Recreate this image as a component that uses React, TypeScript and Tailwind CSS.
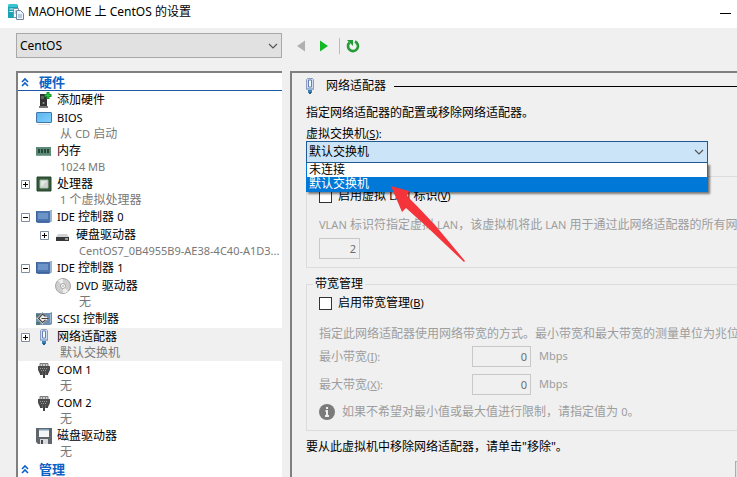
import React, { useState } from 'react';
import clsx from 'clsx';

type Node = {
  id: string;
  label: React.ReactNode;
  detail?: React.ReactNode;
  icon: React.ReactNode;
  expand?: 'plus' | 'minus';
  nested?: boolean;
};

const Latin = ({ children }: { children: React.ReactNode }) => (
  <span className="text-[11px]">{children}</span>
);

const ServerIcon = () => (
  <svg width="16" height="16" viewBox="0 0 16 16">
    <path d="M0 1l2-1h7l1 2v12H0z" fill="#1ba3b5" />
    <path d="M0 1l2-1h7v3H0z" fill="#3cc4d0" />
    <path d="M1.500 5h4M1.500 7.500h4" stroke="#d8f6f8" />
    <path d="M5.500 4.500h5v9h-5z" fill="#fff" stroke="#8093a6" />
    <path d="M8.500 6.500h4l3 3v6h-7z" fill="#eef4fb" stroke="#6f86a0" />
    <path d="M10 11h4M10 13h4M6.500 7h1.500M6.500 9h1.500" stroke="#7fa3c4" />
  </svg>
);

const AddIcon = () => (
  <svg width="16" height="16" viewBox="0 0 16 16">
    <path d="M4 2h7v12H4z" fill="#333" />
    <path d="M3 14h9v2H3z" fill="#777" />
    <path d="M5 4h3v3H5z" fill="#59635b" />
    <circle cx="7.500" cy="11" r="1" fill="#999" />
    <path d="M12 0v7M8.500 3.500h7" stroke="#13912a" strokeWidth="3" />
    <path d="M12 1v5M9.500 3.500h5" stroke="#35cf3d" strokeWidth="1" />
  </svg>
);

const MonitorIcon = () => (
  <svg width="16" height="16" viewBox="0 0 16 16">
    <defs>
      <linearGradient id="screen" x1="0" y1="0" x2="1" y2="1">
        <stop offset="0" stopColor="#5bb4f2" />
        <stop offset="1" stopColor="#7fd0fb" />
      </linearGradient>
    </defs>
    <rect x="0.500" y="2.500" width="15" height="10" rx="0.500" fill="url(#screen)" stroke="#4176a8" />
    <path d="M2 14.500h12" stroke="#ddd" />
  </svg>
);

const MemoryIcon = () => (
  <svg width="16" height="16" viewBox="0 0 16 16">
    <path d="M0 4h15v9H0z" fill="#5d8a76" />
    <path d="M2 6h2v4H2zM5 6h2v4H5zM8 6h2v4H8zM11 6h2v4h-2z" fill="#27473a" />
    <path d="M0.500 12.500h14" stroke="#a9c4b4" strokeDasharray="1 1" />
  </svg>
);

const CpuIcon = () => (
  <svg width="16" height="16" viewBox="0 0 16 16">
    <path d="M1 1h14v14H1z" fill="#35593b" stroke="#27452c" />
    <path d="M4 4h8v8H4z" fill="#e4e8e4" stroke="#9fb5a1" />
    <path d="M5 11l6-6v6z" fill="#cdd3cd" />
  </svg>
);

const ControllerIcon = () => (
  <svg width="16" height="16" viewBox="0 0 16 16">
    <path d="M0 2h13l3-1v11l-3 2H2l-2-1z" fill="#4c74ad" />
    <path d="M2 4h10v6H2z" fill="#6d94c8" />
    <path d="M14 2l2-1v11l-2 1z" fill="#9db4d3" />
    <path d="M0.500 2v11M1 12.500h12" stroke="#3d639b" />
  </svg>
);

const DiskIcon = () => (
  <svg width="16" height="16" viewBox="0 0 16 16">
    <path d="M3 7h9l2 3H1z" fill="#d2d2d2" />
    <path d="M1 10h13v4H1z" fill="#383838" />
    <path d="M10 12h3" stroke="#fff" />
  </svg>
);

const DvdIcon = () => (
  <svg width="16" height="16" viewBox="0 0 16 16">
    <circle cx="8" cy="8" r="7.500" fill="#cfcfcf" stroke="#a5a5a5" />
    <path d="M8 8L3 2.500A7 7 0 0 1 8 1zM8 8l5 5.500A7 7 0 0 1 8 15z" fill="#efefef" />
    <circle cx="8" cy="8" r="2.500" fill="#f8f8f8" stroke="#aaa" />
    <circle cx="8" cy="8" r="0.800" fill="#999" />
  </svg>
);

const ScsiIcon = () => (
  <svg width="16" height="16" viewBox="0 0 16 16">
    <path d="M0 2h14l2-1v12l-2 1H0z" fill="#6d8fb4" />
    <path d="M0 3h4v3H0zM0 11h4v3H0z" fill="#4d7a76" />
    <path d="M6.500 1.500l6 6-6 6-6-6z" fill="#eee" stroke="#999" />
    <path d="M9.500 5.500L6.500 3 2.500 7.500l4 4 3-2.500M5.500 7.500h7" fill="none" stroke="#444" strokeWidth="1.200" />
    <path d="M14.500 3v9" stroke="#9fbbd8" />
  </svg>
);

const NetworkIcon = () => (
  <svg width="16" height="16" viewBox="0 0 16 16">
    <path d="M4.500 11.500v-10l1-1h5l1 1v10z" fill="#d3def0" stroke="#8c9cbc" />
    <path d="M6.500 2v7h3V2z" fill="#f4f8ff" stroke="#6582ba" />
    <path d="M5 10h6v2H5z" fill="#9db3d6" />
    <path d="M6 12h4v3H6z" fill="#3a82b4" />
    <path d="M8 14v2" stroke="#2a5f8c" strokeWidth="2" />
  </svg>
);

const ComIcon = () => (
  <svg width="16" height="16" viewBox="0 0 16 16">
    <path d="M4 4V1.500h8V4" fill="#ccc" stroke="#777" />
    <path d="M6.500 1v3M9.500 1v3" stroke="#888" />
    <path d="M2 4h12v4l-1 2H3L2 8z" fill="#4c4c4c" />
    <path d="M4 6.500h8M5 8.500h6" stroke="#999" strokeDasharray="1 1" />
    <path d="M3 10h10v1l-2 1v1H5v-1l-2-1z" fill="#666" />
    <path d="M5 10v3M8 10v6M11 10v3" stroke="#444" strokeWidth="2" />
  </svg>
);

const FloppyIcon = () => (
  <svg width="16" height="16" viewBox="0 0 16 16">
    <path d="M0 0h16v16H2l-2-2z" fill="#60666b" />
    <path d="M3 1h10v8H3z" fill="#f4f6f7" />
    <path d="M3 1h10v1.500H3z" fill="#7fa3b8" />
    <path d="M4 11h8v5H4z" fill="#d9dcde" />
    <path d="M5 12h2v4H5z" fill="#44494d" />
  </svg>
);

const Chevron = () => (
  <svg className="pointer-events-none absolute right-1 top-1/2 -translate-y-1/2" width="10" height="6" viewBox="0 0 10 6">
    <path d="M1 1l4 4 4-4" fill="none" stroke="#555" strokeWidth="1.200" />
  </svg>
);

const NODES: Node[] = [
  { id: 'add', label: '添加硬件', icon: <AddIcon /> },
  { id: 'bios', label: <Latin>BIOS</Latin>, detail: <>从 <Latin>CD</Latin> 启动</>, icon: <MonitorIcon /> },
  { id: 'memory', label: '内存', detail: <Latin>1024 MB</Latin>, icon: <MemoryIcon /> },
  { id: 'cpu', label: '处理器', detail: <><Latin>1</Latin> 个虚拟处理器</>, icon: <CpuIcon />, expand: 'plus' },
  { id: 'ide0', label: <><Latin>IDE</Latin> 控制器 <Latin>0</Latin></>, icon: <ControllerIcon />, expand: 'minus' },
  {
    id: 'disk',
    label: '硬盘驱动器',
    detail: <Latin>CentOS7_0B4955B9-AE38-4C40-A1D3...</Latin>,
    icon: <DiskIcon />,
    expand: 'plus',
    nested: true,
  },
  { id: 'ide1', label: <><Latin>IDE</Latin> 控制器 <Latin>1</Latin></>, icon: <ControllerIcon />, expand: 'minus' },
  { id: 'dvd', label: <><Latin>DVD</Latin> 驱动器</>, detail: '无', icon: <DvdIcon />, nested: true },
  { id: 'scsi', label: <><Latin>SCSI</Latin> 控制器</>, icon: <ScsiIcon /> },
  { id: 'net', label: '网络适配器', detail: '默认交换机', icon: <NetworkIcon />, expand: 'plus' },
  { id: 'com1', label: <Latin>COM 1</Latin>, detail: '无', icon: <ComIcon /> },
  { id: 'com2', label: <Latin>COM 2</Latin>, detail: '无', icon: <ComIcon /> },
  { id: 'floppy', label: '磁盘驱动器', detail: '无', icon: <FloppyIcon /> },
];

const SectionHeader = ({ title }: { title: string }) => (
  <h2 className="flex h-[18px] items-center gap-[10px] border-b border-[#1c5aa6] pl-[3px] text-[13px] leading-4 font-bold text-[#0b62c4]">
    <svg width="8" height="10" viewBox="0 0 8 10">
      <path d="M1 5l3-3 3 3M1 9l3-3 3 3" fill="none" stroke="#0b62c4" strokeWidth="1.600" />
    </svg>
    {title}
  </h2>
);

const TreeItem = ({ node, selected }: { node: Node; selected: boolean }) => (
  <li className={clsx('flex items-start', node.nested ? 'pl-[22px]' : 'pl-[3px]', selected && 'bg-[#f0f0f0]')}>
    <span className="flex h-[18px] w-[15px] shrink-0 items-center">
      {node.expand && (
        <button type="button" aria-label={node.id} className="block">
          <svg width="9" height="9" viewBox="0 0 9 9">
            <path d="M0.500 0.500h8v8h-8z" fill="#fff" stroke="#7f8fa0" />
            <path d={node.expand === 'plus' ? 'M2 4.500h5M4.500 2v5' : 'M2 4.500h5'} stroke="#000" />
          </svg>
        </button>
      )}
    </span>
    <span className="flex h-[18px] w-[21px] shrink-0 items-center">{node.icon}</span>
    <span className="min-w-0 whitespace-nowrap">
      <span className="block h-[18px] leading-[18px]">{node.label}</span>
      {node.detail && <span className="block h-[15px] pl-[3px] leading-[13px] text-[#787878]">{node.detail}</span>}
    </span>
  </li>
);

const Bandwidth = ({ id, label, hotkey }: { id: string; label: string; hotkey: string }) => (
  <div className="flex h-[21px] items-center">
    <label htmlFor={id} className="w-[153px] shrink-0">
      {label}<Latin>(<u>{hotkey}</u>):</Latin>
    </label>
    <input
      id={id}
      disabled
      defaultValue="0"
      className="h-[21px] w-[59px] border border-[#c8c8c8] bg-[#f0f0f0] px-[3px] text-right text-[11px] text-[#6d6d6d]"
    />
    <span className="ml-2 text-[11px]">Mbps</span>
  </div>
);

export default function App() {
  const [network, setNetwork] = useState('默认交换机');

  return (
    <div className="flex h-screen flex-col overflow-hidden bg-[#f0f0f0] font-['Noto_Sans','Noto_Sans_CJK_SC',sans-serif] text-xs text-black">
      <header className="flex h-7 shrink-0 items-center bg-white pr-[6px] pb-1 pl-2">
        <ServerIcon />
        <h1 className="ml-1 flex-1 leading-6">MAOHOME 上 CentOS 的设置</h1>
        <button type="button" aria-label="最小化">
          <svg width="11" height="11" viewBox="0 0 11 11">
            <path d="M0 6.500h11" stroke="#000" />
          </svg>
        </button>
      </header>

      <div className="flex h-[43px] shrink-0 items-start pt-[5px] pl-4">
        <div className="relative w-[266px]">
          <select aria-label="虚拟机" className="h-[25px] w-full appearance-none border border-[#a8a8a8] bg-[#e1e1e1] pl-[3px]">
            <option>CentOS</option>
          </select>
          <Chevron />
        </div>
        <div className="ml-[14px] flex h-[25px] items-center">
          <button type="button" aria-label="后退">
            <svg width="10" height="12" viewBox="0 0 10 12">
              <path d="M9 0.500v11L1 6z" fill="#b0b0b0" />
            </svg>
          </button>
          <button type="button" aria-label="前进" className="ml-[13px]">
            <svg width="10" height="12" viewBox="0 0 10 12">
              <path d="M1 0.500v11L9 6z" fill="#12b825" />
            </svg>
          </button>
          <span className="ml-[10px] h-4 w-px bg-[#bcbcbc]" />
          <button type="button" aria-label="刷新" className="ml-[6px]">
            <svg width="14" height="14" viewBox="0 0 14 14">
              <path d="M9 2.500A5 5 0 1 1 3.500 3.500" fill="none" stroke="#239b36" strokeWidth="2.600" />
              <path d="M1 1h6v6z" fill="#239b36" />
            </svg>
          </button>
        </div>
      </div>

      <div className="flex min-h-0 flex-1 gap-2 pl-4">
        <nav className="w-[266px] shrink-0 overflow-hidden border-t-2 border-l-2 border-[#808080] bg-white">
          <SectionHeader title="硬件" />
          <ul>
            {NODES.map((node) => (
              <TreeItem key={node.id} node={node} selected={node.id === 'net'} />
            ))}
          </ul>
          <SectionHeader title="管理" />
        </nav>

        <main className="min-w-0 flex-1 overflow-hidden border-t-2 border-l-2 border-[#808080] pl-[14px] whitespace-nowrap">
          <div className="flex h-[26px] items-center">
            <span className="-ml-1"><NetworkIcon /></span>
            <h2 className="ml-2">网络适配器</h2>
            <span className="ml-2 h-px flex-1 bg-black" />
          </div>
          <p className="leading-7">指定网络适配器的配置或移除网络适配器。</p>
          <label htmlFor="switch" className="block h-[14px] leading-[14px]">
            虚拟交换机<Latin>(<u>S</u>):</Latin>
          </label>

          <div className="relative z-10 mr-[29px]">
            <select
              id="switch"
              value={network}
              onChange={(e) => setNetwork(e.target.value)}
              className="block h-[22px] w-full appearance-none border border-[#1f5a94] bg-[#cce4f7] pl-[2px]"
            >
              <option>默认交换机</option>
              <option>未连接</option>
            </select>
            <Chevron />
            <ul className="absolute top-full left-0 w-full border border-t-0 border-[#0078d7] bg-white shadow-[2px_2px_2px_rgba(0,0,0,0.5)]">
              {['未连接', '默认交换机'].map((name) => (
                <li key={name}>
                  <button
                    type="button"
                    onClick={() => setNetwork(name)}
                    className={clsx(
                      'block h-[14px] w-full pl-[2px] text-left leading-[14px]',
                      name === network && 'bg-[#0078d7] text-white',
                    )}
                  >
                    {name}
                  </button>
                </li>
              ))}
            </ul>
            {/* pointer to the chosen switch */}
            <svg className="pointer-events-none absolute top-11 left-[84px]" width="78" height="80" viewBox="0 0 78 80">
              <path d="M1 1l18 5-2 5 10 10 18 19 30 36-1 1-38-36-20-18-4 4z" fill="#f5333a" />
            </svg>
          </div>

          <fieldset className="mt-[13px] border border-r-0 border-[#dcdcdc] pt-[11px] pb-2 pl-3">
            <label className="flex h-4 items-center gap-[6px]">
              <input type="checkbox" className="size-[13px] appearance-none border border-[#333] bg-white" />
              <span>启用虚拟 <Latin>LAN</Latin> 标识<Latin>(<u>V</u>)</Latin></span>
            </label>
            <label htmlFor="vlan" className="mt-3 block leading-[18px] text-[#9d9d9d]">
              <Latin>VLAN</Latin> 标识符指定虚拟 <Latin>LAN</Latin>，该虚拟机将此 <Latin>LAN</Latin> 用于通过此网络适配器的所有网络
            </label>
            <input
              id="vlan"
              disabled
              defaultValue="2"
              className="mt-1 block h-[21px] w-[41px] border border-[#c8c8c8] bg-[#f0f0f0] px-[3px] text-right text-[11px] text-[#6d6d6d]"
            />
          </fieldset>

          <fieldset className="mt-2 border border-r-0 border-[#dcdcdc] pb-[10px] pl-3 text-[#9d9d9d]">
            <legend className="-ml-[6px] px-[2px] leading-4 text-black">带宽管理</legend>
            <label className="mt-[3px] flex h-4 items-center gap-[6px] text-black">
              <input type="checkbox" className="size-[13px] appearance-none border border-[#333] bg-white" />
              <span>启用带宽管理<Latin>(<u>B</u>)</Latin></span>
            </label>
            <p className="mt-[14px] leading-[18px]">指定此网络适配器使用网络带宽的方式。最小带宽和最大带宽的测量单位为兆位</p>
            <div className="mt-[3px] flex flex-col gap-[7px]">
              <Bandwidth id="min" label="最小带宽" hotkey="I" />
              <Bandwidth id="max" label="最大带宽" hotkey="X" />
            </div>
            <p className="mt-[9px] flex h-4 items-center gap-[7px]">
              <svg width="16" height="16" viewBox="0 0 16 16">
                <circle cx="8" cy="8" r="8" fill="#7b7b7b" />
                <path d="M8 3v2M6.500 7H8v5M6 12h4" fill="none" stroke="#f0f0f0" strokeWidth="2" />
              </svg>
              <span>如果不希望对最小值或最大值进行限制，请指定值为 <Latin>0</Latin>。</span>
            </p>
          </fieldset>

          <p className="mt-[7px] leading-[18px]">要从此虚拟机中移除网络适配器，请单击"移除"。</p>
          <div className="-mr-[78px] mt-[5px] flex justify-end">
            <button type="button" aria-label="移除" className="h-6 w-20 border border-[#adadad] bg-[#e1e1e1]" />
          </div>
        </main>
      </div>
    </div>
  );
}
